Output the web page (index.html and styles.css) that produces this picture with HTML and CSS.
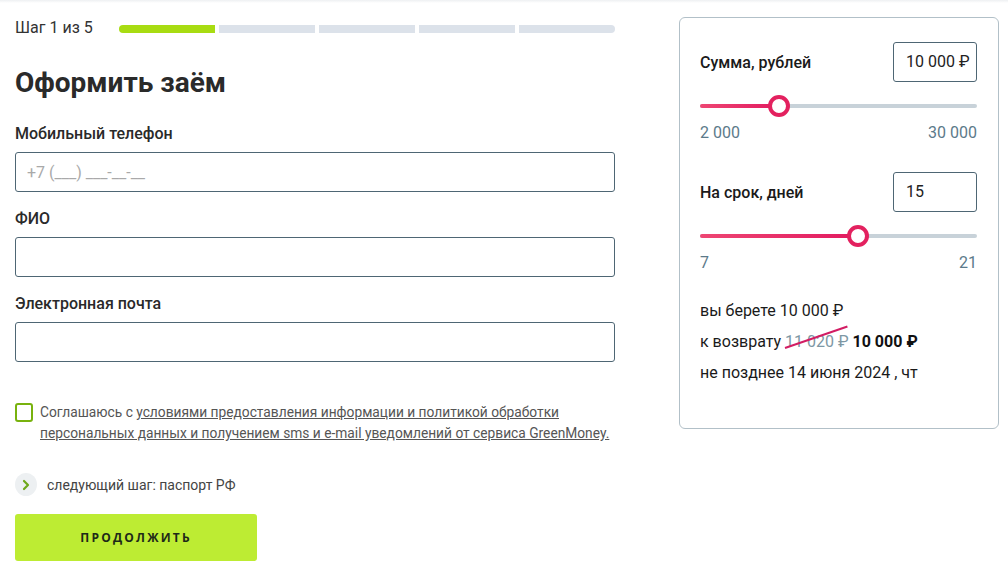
FILE: index.html
```html
<!DOCTYPE html>
<html lang="ru">
<head>
<meta charset="utf-8">
<title>Оформить заём</title>
<link rel="stylesheet" href="styles.css">
</head>
<body>
<div class="topshade"></div>
<div class="page">
  <main class="main">
    <div class="steps">
      <span class="steps-text">Шаг 1 из 5</span>
      <div class="bar">
        <span class="seg seg-active"></span>
        <span class="seg"></span>
        <span class="seg"></span>
        <span class="seg"></span>
        <span class="seg seg-last"></span>
      </div>
    </div>
    <h1 class="title">Оформить заём</h1>

    <label class="field">
      <span class="field-label">Мобильный телефон</span>
      <input class="field-input" type="text" placeholder="+7 (___) ___-__-__">
    </label>
    <label class="field">
      <span class="field-label">ФИО</span>
      <input class="field-input" type="text">
    </label>
    <label class="field">
      <span class="field-label">Электронная почта</span>
      <input class="field-input" type="text">
    </label>

    <div class="agree">
      <span class="checkbox"></span>
      <p class="agree-text">Соглашаюсь с <a href="#" class="agree-link">условиями предоставления информации и политикой обработки персональных данных и получением sms и e-mail уведомлений от сервиса GreenMoney.</a></p>
    </div>

    <div class="next">
      <span class="next-icon">
        <svg width="10" height="12" viewBox="0 0 10 12"><path d="M3 2 L7 6 L3 10" fill="none" stroke="#6ea81a" stroke-width="2.2" stroke-linecap="round" stroke-linejoin="round"/></svg>
      </span>
      <span class="next-text">следующий шаг: паспорт РФ</span>
    </div>

    <button class="btn" type="button">ПРОДОЛЖИТЬ</button>
  </main>

  <aside class="calc">
    <div class="calc-row">
      <span class="calc-label">Сумма, рублей</span>
      <span class="calc-box">10 000 ₽</span>
    </div>
    <div class="slider">
      <div class="track"><div class="fill" style="width:28.57%"></div></div>
      <span class="thumb" style="left:28.57%"></span>
    </div>
    <div class="range"><span>2 000</span><span>30 000</span></div>

    <div class="calc-row calc-row-2">
      <span class="calc-label">На срок, дней</span>
      <span class="calc-box">15</span>
    </div>
    <div class="slider">
      <div class="track"><div class="fill" style="width:57.14%"></div></div>
      <span class="thumb" style="left:57.14%"></span>
    </div>
    <div class="range"><span>7</span><span>21</span></div>

    <div class="summary">
      <p class="sum-line">вы берете 10 000 ₽</p>
      <p class="sum-line">к возврату <span class="old">11 020 ₽</span> <b class="new">10 000 ₽</b></p>
      <p class="sum-line">не позднее 14 июня 2024 , чт</p>
    </div>
  </aside>
</div>
</body>
</html>
```

FILE: styles.css
```css
* { box-sizing: border-box; }
html, body { margin: 0; padding: 0; background: #fff; }
body {
  font-family: Roboto, "Liberation Sans", "DejaVu Sans", sans-serif;
  color: #222;
}
.topshade {
  height: 3px;
  background: linear-gradient(#eef0f2, #fff);
}
.page {
  display: flex;
  align-items: flex-start;
  padding: 14px 0 0 15px;
  gap: 64px;
}
.main { width: 600px; }

.steps {
  display: flex;
  align-items: center;
  justify-content: space-between;
  height: 20px;
}
.steps-text { font-size: 16px; color: #333; }
.bar {
  display: flex;
  gap: 4px;
  width: 496px;
  margin-top: 4px;
}
.seg {
  flex: 1;
  height: 8px;
  background: #dce2ea;
}
.seg-active { background: #a8dc12; border-radius: 4px 0 0 4px; }
.seg-last { border-radius: 0 4px 4px 0; }

.title {
  margin: 29px 0 0;
  font-size: 28px;
  line-height: 34px;
  font-weight: 700;
  color: #2a2a2a;
}

.field { display: block; }
.field + .field { margin-top: 17px; }
.title + .field { margin-top: 24px; }
.field-label {
  display: block;
  font-size: 16px;
  font-weight: 500;
  line-height: 20px;
  color: #2a2a2a;
}
.field-input {
  display: block;
  width: 600px;
  height: 40px;
  margin-top: 8px;
  border: 1px solid #4e6674;
  border-radius: 3px;
  padding: 0 11px;
  font-family: inherit;
  font-size: 16px;
  color: #333;
  background: #fff;
  outline: none;
}
.field-input::placeholder { color: #a9a9a9; }

.agree {
  display: flex;
  align-items: flex-start;
  gap: 7px;
  margin-top: 41px;
}
.checkbox {
  flex: none;
  width: 18px;
  height: 19px;
  border: 2px solid #78b20e;
  border-radius: 3px;
}
.agree-text {
  margin: -1px 0 0;
  font-size: 13.75px;
  line-height: 21px;
  color: #555;
}
.agree-link { color: #555; text-decoration: underline; }

.next {
  display: flex;
  align-items: center;
  gap: 10px;
  margin-top: 29px;
}
.next-icon {
  width: 22px;
  height: 23px;
  border-radius: 50%;
  background: #edf0f2;
  display: flex;
  align-items: center;
  justify-content: center;
}
.next-text { font-size: 14px; color: #444; }

.btn {
  display: block;
  margin-top: 18px;
  width: 242px;
  height: 47px;
  border: none;
  border-radius: 3px;
  background: #bdec33;
  font-family: "Open Sans", Roboto, sans-serif;
  font-size: 12px;
  font-weight: 700;
  letter-spacing: 2.2px;
  color: #1e2a18;
  padding: 0;
}

.calc {
  width: 320px;
  height: 412px;
  margin-top: 0;
  border: 1px solid #b2c0c8;
  border-radius: 6px;
  padding: 24px 21px 0 20px;
}
.calc-row {
  display: flex;
  align-items: center;
  justify-content: space-between;
}
.calc-row-2 { margin-top: 30px; }
.calc-label { font-size: 16px; font-weight: 500; color: #1a1a1a; }
.calc-box {
  width: 84px;
  height: 40px;
  border: 1px solid #4e6674;
  border-radius: 3px;
  padding: 9px 0 0 12px;
  font-size: 16px;
  line-height: 20px;
  color: #222;
}
.slider {
  position: relative;
  height: 22px;
  margin-top: 13px;
  display: flex;
  align-items: center;
}
.track {
  width: 100%;
  height: 4px;
  border-radius: 2px;
  background: #c8d2d9;
  overflow: hidden;
}
.fill {
  height: 100%;
  background: linear-gradient(90deg, #ee4673, #e21a60);
}
.thumb {
  position: absolute;
  top: 0;
  width: 22px;
  height: 22px;
  margin-left: -11px;
  border-radius: 50%;
  background: #fff;
  border: 4px solid #e3215f;
}
.range {
  display: flex;
  justify-content: space-between;
  margin-top: 6px;
  font-size: 16px;
  line-height: 19px;
  color: #5c7a8a;
}
.summary { margin-top: 23px; }
.sum-line {
  margin: 0;
  font-size: 16px;
  line-height: 31px;
  color: #1a1a1a;
}
.old {
  position: relative;
  color: #7d97a4;
}
.old::after {
  content: "";
  position: absolute;
  left: 0;
  top: 50%;
  width: 66px;
  height: 2px;
  background: #d21c63;
  transform: rotate(-19deg);
  transform-origin: 0 50%;
  margin-top: 5px;
}
.new { font-weight: 700; color: #111; }
```
